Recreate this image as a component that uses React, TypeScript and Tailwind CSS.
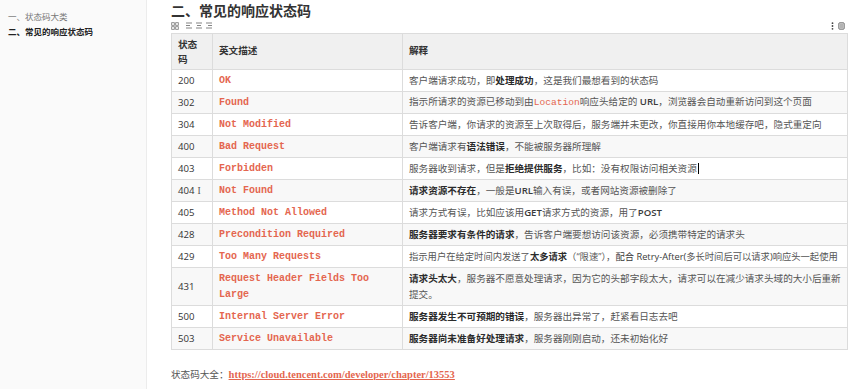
import React from 'react';

const sans = "font-['Open_Sans','Noto_Sans_CJK_SC',sans-serif]";
const mono = "font-['Liberation_Mono',monospace]";

type Row = { code: string; name: string; desc: React.ReactNode; tall?: boolean; nowrap?: boolean };

function B({ children }: { children: React.ReactNode }) {
  return <span className="font-bold text-[#2b2b2b]">{children}</span>;
}

function L({ children }: { children: React.ReactNode }) {
  return <span className="font-semibold text-[#3a3a3a]">{children}</span>;
}

const rows: Row[] = [
  { code: '200', name: 'OK', desc: <>客户端请求成功，即<B>处理成功</B>，这是我们最想看到的状态码</> },
  {
    code: '302',
    name: 'Found',
    desc: (
      <>
        指示所请求的资源已移动到由<span className={`${mono} text-[#e4664f]`}>Location</span>响应头给定的 <L>URL</L>，浏览器会自动重新访问到这个页面
      </>
    ),
  },
  { code: '304', name: 'Not Modified', desc: <>告诉客户端，你请求的资源至上次取得后，服务端并未更改，你直接用你本地缓存吧，隐式重定向</> },
  { code: '400', name: 'Bad Request', desc: <>客户端请求有<B>语法错误</B>，不能被服务器所理解</> },
  {
    code: '403',
    name: 'Forbidden',
    desc: (
      <>
        服务器收到请求，但是<B>拒绝提供服务</B>，比如：没有权限访问相关资源
        <span className="inline-block w-px h-[11px] bg-black align-middle ml-px" />
      </>
    ),
  },
  { code: '404', name: 'Not Found', desc: <><B>请求资源不存在</B>，一般是<L>URL</L>输入有误，或者网站资源被删除了</> },
  { code: '405', name: 'Method Not Allowed', desc: <>请求方式有误，比如应该用<L>GET</L>请求方式的资源，用了<L>POST</L></> },
  { code: '428', name: 'Precondition Required', desc: <><B>服务器要求有条件的请求</B>，告诉客户端要想访问该资源，必须携带特定的请求头</> },
  {
    code: '429',
    name: 'Too Many Requests',
    nowrap: true,
    desc: (
      <>
        指示用户在给定时间内发送了<B>太多请求</B>（“限速”），<span className="text-[#3a3a3a]">配合 Retry-After(</span>多长时间后可以请求<span className="text-[#3a3a3a]">)</span>响应头一起使用
      </>
    ),
  },
  {
    code: '431',
    name: 'Request Header Fields Too Large',
    tall: true,
    desc: <><B>请求头太大</B>，服务器不愿意处理请求，因为它的头部字段太大，请求可以在减少请求头域的大小后重新提交。</>,
  },
  { code: '500', name: 'Internal Server Error', desc: <><B>服务器发生不可预期的错误</B>，服务器出异常了，赶紧看日志去吧</> },
  { code: '503', name: 'Service Unavailable', desc: <><B>服务器尚未准备好处理请求</B>，服务器刚刚启动，还未初始化好</> },
];

function AlignIcon({ kind }: { kind: 'left' | 'center' | 'right' }) {
  const short = kind === 'left' ? 'M1 3.5h4' : kind === 'center' ? 'M2 3.5h4' : 'M3 3.5h4';
  return (
    <svg width="8" height="8" viewBox="0 0 8 8" className="text-[#777]">
      <path d={`M1 1h6 ${short} M1 6h6`} stroke="currentColor" strokeWidth="0.9" fill="none" />
    </svg>
  );
}

function TableIcon() {
  return (
    <svg width="8" height="8" viewBox="0 0 8 8" className="text-[#777]">
      <rect x="0.7" y="0.7" width="2.6" height="2.6" stroke="currentColor" strokeWidth="0.8" fill="none" />
      <rect x="4.7" y="0.7" width="2.6" height="2.6" stroke="currentColor" strokeWidth="0.8" fill="none" />
      <rect x="0.7" y="4.7" width="2.6" height="2.6" stroke="currentColor" strokeWidth="0.8" fill="none" />
      <rect x="4.7" y="4.7" width="2.6" height="2.6" stroke="currentColor" strokeWidth="0.8" fill="none" />
    </svg>
  );
}

export default function App() {
  return (
    <div className={`flex w-[858px] h-[389px] bg-white overflow-hidden ${sans}`}>
      {/* Sidebar outline */}
      <aside className="w-[147px] shrink-0 bg-[#fafafa] border-r border-[#ececec] pt-[9px] pl-[8px]">
        <div className="text-[8.5px] leading-[15px] text-[#777]">一、状态码大类</div>
        <div className="text-[8.5px] leading-[15px] font-bold text-[#222]">二、常见的响应状态码</div>
      </aside>

      {/* Main */}
      <main className="flex-1 pl-[24px] pr-[11px]">
        <h2 className="text-[14px] leading-[18px] font-bold text-[#333] mt-[2px]">二、常见的响应状态码</h2>
        <div className="flex items-center justify-between h-[12px]">
          <div className="flex items-center gap-[2px]">
            <TableIcon />
            <span className="w-[2px]" />
            <AlignIcon kind="left" />
            <AlignIcon kind="center" />
            <AlignIcon kind="right" />
          </div>
          <div className="flex items-center gap-[4px] pr-[3px]">
            <svg width="3" height="8" viewBox="0 0 3 8">
              <circle cx="1.5" cy="1.2" r="0.9" fill="#444" />
              <circle cx="1.5" cy="4" r="0.9" fill="#444" />
              <circle cx="1.5" cy="6.8" r="0.9" fill="#444" />
            </svg>
            <svg width="7" height="8" viewBox="0 0 7 8">
              <rect x="0.8" y="0.8" width="5.4" height="6.4" rx="0.8" stroke="#666" strokeWidth="0.9" fill="#ddd" />
              <path d="M2 3h3M2 5h3" stroke="#666" strokeWidth="0.7" />
            </svg>
          </div>
        </div>

        <table className="table-fixed border-collapse w-[676px] mt-[1px] text-[9.6px] text-[#555]">
          <colgroup>
            <col className="w-[41px]" />
            <col className="w-[190px]" />
            <col className="w-[445px]" />
          </colgroup>
          <thead>
            <tr className="bg-[#f0f0f0] h-[36px]">
              <th className="border border-[#dcdcdc] px-[6px] text-left font-bold text-[#333] leading-[15px]">状态码</th>
              <th className="border border-[#dcdcdc] px-[6px] text-left font-bold text-[#333]">英文描述</th>
              <th className="border border-[#dcdcdc] px-[6px] text-left font-bold text-[#333]">解释</th>
            </tr>
          </thead>
          <tbody>
            {rows.map((r, i) => (
              <tr key={r.code} className={`${i % 2 === 1 ? 'bg-[#f8f8f8]' : 'bg-white'} ${r.tall ? 'h-[38px]' : 'h-[22px]'}`}>
                <td className="border border-[#dcdcdc] px-[6px] text-[#333] leading-[16px]">
                  {r.code}
                  {r.code === '404' && <span className="ml-[3px] text-[#555] font-['Liberation_Serif',serif]">I</span>}
                </td>
                <td className={`border border-[#dcdcdc] px-[6px] ${mono} font-bold text-[10px] leading-[16px] text-[#e4664f]`}>{r.name}</td>
                <td className={`border border-[#dcdcdc] px-[6px] leading-[16px] ${r.nowrap ? 'whitespace-nowrap overflow-hidden text-[9.3px]' : ''}`}>{r.desc}</td>
              </tr>
            ))}
          </tbody>
        </table>

        <p className="mt-[17px] text-[9.6px] text-[#555] leading-[16px]">
          状态码大全：
          <a className="font-['Liberation_Serif',serif] font-bold text-[10.5px] text-[#e4664f] underline" href="#">
            https://cloud.tencent.com/developer/chapter/13553
          </a>
        </p>
      </main>
    </div>
  );
}
